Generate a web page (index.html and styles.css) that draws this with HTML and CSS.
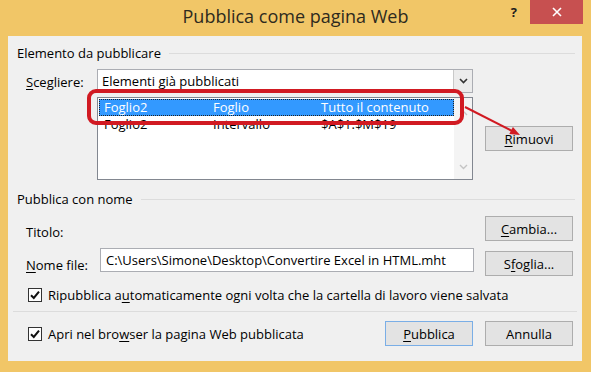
FILE: index.html
```html
<!DOCTYPE html>
<html lang="it">
<head>
  <meta charset="UTF-8" />
  <title>Pubblica come pagina Web</title>
  <link rel="stylesheet" href="styles.css">
</head>
<body>
  <div class="window">
    <header class="titlebar">
      <h1 class="title">Pubblica come pagina Web</h1>
      <div class="controls">
        <span class="help">?</span>
        <span class="close">
          <svg width="10" height="10" viewBox="0 0 10 10"><path d="M1 1 L9 9 M9 1 L1 9" stroke="#fff" stroke-width="1.6" fill="none"/></svg>
        </span>
      </div>
    </header>

    <main class="client">
      <div class="group-head"><span>Elemento da pubblicare</span></div>

      <div class="grid grid-items">
        <label class="lbl lbl-choose"><u>S</u>cegliere:</label>
        <div class="select">
          <span class="select-text">Elementi già pubblicati</span>
          <span class="select-btn">
            <svg width="9" height="6" viewBox="0 0 9 6"><path d="M1 1 L4.5 4.5 L8 1" stroke="#333" stroke-width="1.6" fill="none"/></svg>
          </span>
        </div>
        <span></span>

        <span></span>
        <div class="listbox">
          <div class="rows">
            <div class="row selected"><span>Foglio2</span><span>Foglio</span><span>Tutto il contenuto</span></div>
            <div class="row"><span>Foglio2</span><span>Intervallo</span><span>$A$1:$M$19</span></div>
          </div>
          <div class="scroll">
            <svg width="9" height="6" viewBox="0 0 9 6"><path d="M1 5 L4.5 1.5 L8 5" stroke="#c4c4c4" stroke-width="1.4" fill="none"/></svg>
            <svg width="9" height="6" viewBox="0 0 9 6"><path d="M1 1 L4.5 4.5 L8 1" stroke="#c4c4c4" stroke-width="1.4" fill="none"/></svg>
          </div>
        </div>
        <button class="btn btn-mid"><u>R</u>imuovi</button>
      </div>

      <div class="group-head group-two"><span>Pubblica con nome</span></div>

      <div class="grid grid-name">
        <label class="lbl lbl-title">Titolo:</label>
        <span></span>
        <button class="btn btn-change"><u>C</u>ambia...</button>

        <label class="lbl lbl-file"><u>N</u>ome file:</label>
        <div class="input">C:\Users\Simone\Desktop\Convertire Excel in HTML.mht</div>
        <button class="btn btn-browse">S<u>f</u>oglia...</button>
      </div>

      <div class="check-row">
        <span class="checkbox">
          <svg width="14" height="14" viewBox="0 0 14 14"><rect x="0.5" y="0.5" width="13" height="13" fill="#fff" stroke="#333"/><path d="M3 7.2 L5.8 10 L11 3.6" stroke="#111" stroke-width="2" fill="none"/></svg>
        </span>
        <span>Ripubblica a<u>u</u>tomaticamente ogni volta che la cartella di lavoro viene salvata</span>
      </div>

      <div class="separator"></div>

      <div class="footer">
        <div class="check-row footer-check">
          <span class="checkbox">
            <svg width="14" height="14" viewBox="0 0 14 14"><rect x="0.5" y="0.5" width="13" height="13" fill="#fff" stroke="#333"/><path d="M3 7.2 L5.8 10 L11 3.6" stroke="#111" stroke-width="2" fill="none"/></svg>
          </span>
          <span>Apri nel bro<u>w</u>ser la pagina Web pubblicata</span>
        </div>
        <button class="btn btn-default"><u>P</u>ubblica</button>
        <button class="btn">Annulla</button>
      </div>
    </main>

    <!-- annotation drawn over the screenshot -->
    <div class="callout"></div>
    <svg class="arrow" width="591" height="372" viewBox="0 0 591 372">
      <line x1="465" y1="107" x2="512" y2="131" stroke="#d11a22" stroke-width="2"/>
      <polygon points="520,135 509.3,134.1 512.9,126.9" fill="#d11a22"/>
    </svg>
  </div>
</body>
</html>
```

FILE: styles.css
```css
:root {
  --frame: #f1c667;
  --face: #f0f0f0;
  --line: #dcdcdc;
  --btn: #e3e3e3;
  --btn-border: #adadad;
  --field-border: #abadb3;
  --select-blue: #3399ff;
  --red: #d11a22;
}

* {
  margin: 0;
  padding: 0;
  box-sizing: border-box;
}

body {
  font-family: 'Open Sans', 'Noto Sans', sans-serif;
  font-size: 13px;
  color: #000;
  background: var(--frame);
}

u {
  text-underline-offset: 2px;
}

.window {
  position: relative;
  width: 591px;
  height: 372px;
  background: var(--frame);
}

/* title bar */
.titlebar {
  height: 36px;
  display: grid;
  grid-template-columns: 1fr auto 1fr;
  align-items: start;
}

.title {
  grid-column: 2;
  font-size: 18px;
  font-weight: 400;
  line-height: 32px;
  color: #2e2a1e;
}

.controls {
  grid-column: 3;
  justify-self: end;
  display: flex;
  align-items: flex-start;
}

.help {
  font-weight: 700;
  font-size: 13px;
  line-height: 24px;
  margin-right: 13px;
  color: #1d1d1d;
}

.close {
  width: 53px;
  height: 24px;
  margin-right: 8px;
  background: #c75050;
  display: flex;
  align-items: center;
  justify-content: center;
}

/* dialog body */
.client {
  margin: 0 9px 0 8px;
  height: 325px;
  background: var(--face);
  padding: 9px 9px 0 9px;
}

.group-head {
  display: flex;
  align-items: center;
  gap: 8px;
  line-height: 16px;
}

.group-head::after {
  content: "";
  flex: 1;
  height: 1px;
  background: var(--line);
  margin-right: -2px;
}

.group-two {
  margin-top: 11px;
}

.grid {
  display: grid;
  padding-left: 9px;
}

.grid-items {
  margin-top: 8px;
  grid-template-columns: 71px 376px 1fr;
  grid-template-rows: 24px 83px;
  row-gap: 4px;
}

.grid-name {
  margin-top: 9px;
  grid-template-columns: 74px 374px 1fr;
  grid-template-rows: 25px 28px;
  row-gap: 7px;
}

.lbl {
  line-height: 16px;
  white-space: nowrap;
}

.lbl-choose {
  align-self: center;
  margin-top: 2px;
}

.lbl-title {
  align-self: end;
  margin-bottom: 1px;
}

.lbl-file {
  align-self: end;
  margin-bottom: 3px;
}

/* combo box */
.select {
  display: flex;
  background: #fff;
  border: 1px solid var(--field-border);
}

.select-text {
  flex: 1;
  padding-left: 4px;
  line-height: 22px;
}

.select-btn {
  width: 19px;
  background: #ececec;
  border-left: 1px solid #c9c9c9;
  display: flex;
  align-items: center;
  justify-content: center;
}

/* list box */
.listbox {
  display: flex;
  background: #fff;
  border: 1px solid #828790;
}

.rows {
  flex: 1;
  padding: 1px 0 0 1px;
}

.row {
  display: grid;
  grid-template-columns: 109px 108px 1fr;
  padding-left: 5px;
  line-height: 17px;
  height: 17px;
}

.row.selected {
  background: var(--select-blue);
  color: #fff;
  outline: 1px dotted #222;
  outline-offset: -1px;
}

.scroll {
  width: 18px;
  background: #f4f4f4;
  display: flex;
  flex-direction: column;
  justify-content: space-between;
  align-items: center;
  padding: 12px 0 9px;
}

/* buttons */
.btn {
  width: 88px;
  height: 25px;
  font: inherit;
  color: #000;
  background: var(--btn);
  border: 1px solid var(--btn-border);
  justify-self: end;
}

.btn-mid {
  align-self: center;
}

.btn-change {
  align-self: start;
}

.btn-browse {
  align-self: end;
}

.btn-default {
  border-color: #7aaee6;
  margin-right: 12px;
}

/* text field */
.input {
  height: 24px;
  background: #fff;
  border: 1px solid var(--field-border);
  padding-left: 5px;
  line-height: 22px;
  white-space: nowrap;
  overflow: hidden;
}

/* check boxes */
.check-row {
  display: flex;
  align-items: center;
  gap: 6px;
  margin-top: 12px;
  padding-left: 11px;
  height: 14px;
  line-height: 16px;
}

.checkbox {
  display: flex;
  width: 14px;
  height: 14px;
}

.separator {
  height: 1px;
  background: var(--line);
  margin: 9px -4px 0;
}

.footer {
  display: flex;
  align-items: center;
  margin-top: 9px;
  height: 25px;
}

.footer-check {
  margin-top: 0;
  margin-right: auto;
}

/* red annotation on top of the dialog */
.callout {
  position: absolute;
  left: 87px;
  top: 89px;
  width: 377px;
  height: 36px;
  border: 4px solid var(--red);
  border-radius: 9px;
}

.arrow {
  position: absolute;
  left: 0;
  top: 0;
  pointer-events: none;
}
```
